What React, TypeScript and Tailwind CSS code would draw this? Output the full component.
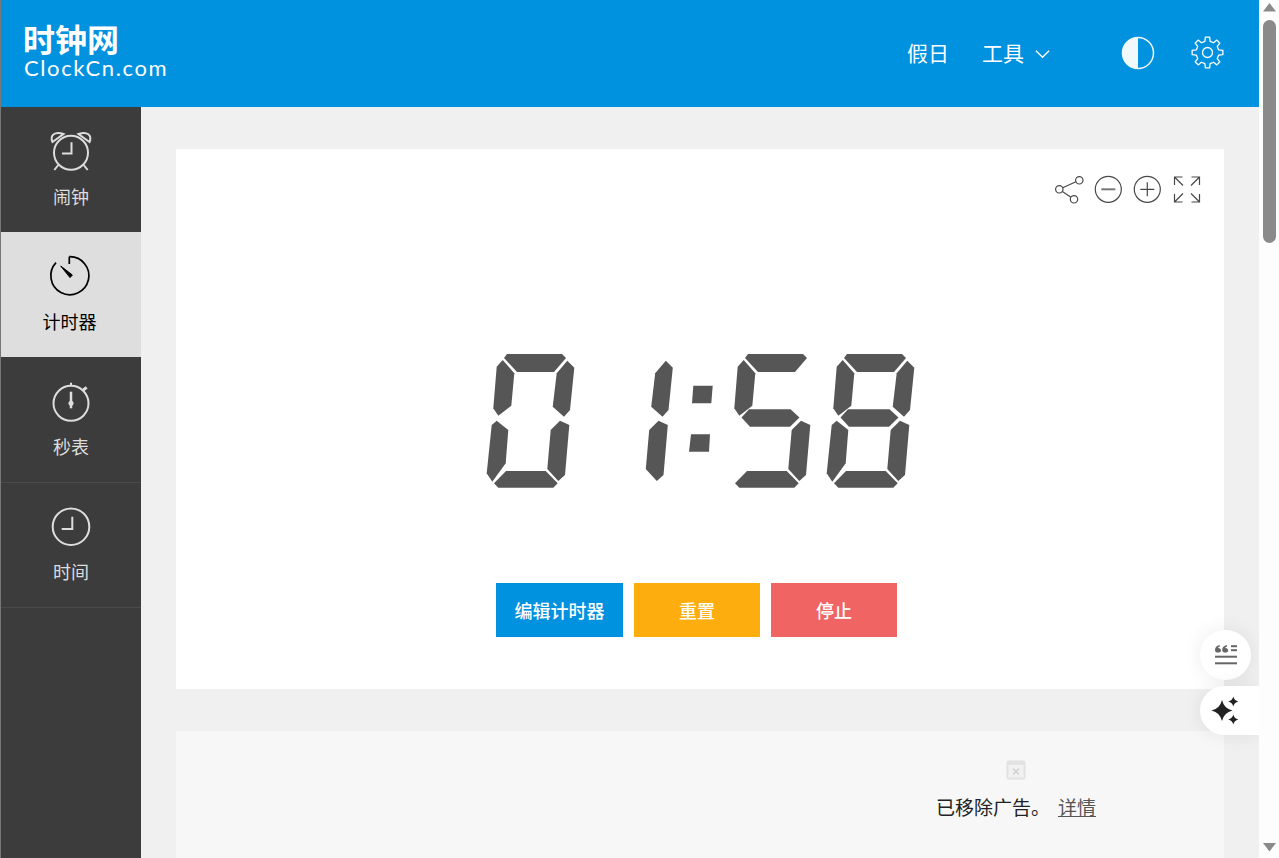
const SEGMENTS: Record<string, string> = {
  a: "504,358 507,354 562,354 566,358 554,372 517,372",
  f: "502.7,360 514.3,373.3 511.3,405.7 498.3,415.7 493.3,408.3 496.7,366.7",
  b: "567.3,360.7 574.3,367.7 570,410 564,416.7 552.7,406.7 556.7,373.3",
  g: "508,409.3 549.5,409.3 558.5,417.5 549,426.7 509,426.7 500.5,417.5",
  e: "496.7,420.7 508.3,430 505.7,463.3 492.3,481.7 486.7,473.3 491.7,425",
  c: "560,420.7 569.3,425 565,475 558.3,481 547.3,469 550.7,430",
  d: "506,471 545.7,471 557.7,483.3 553.3,487.7 498.3,487.7 494,483.3",
};

const DIGITS: Record<string, string[]> = {
  "0": ["a", "b", "c", "d", "e", "f"],
  "1": ["b", "c"],
  "5": ["a", "f", "g", "c", "d"],
  "8": ["a", "b", "c", "d", "e", "f", "g"],
};

function SevenSegment({ digit, x }: { digit: string; x: number }) {
  return (
    <g transform={`translate(${x} 0)`}>
      {DIGITS[digit].map((s) => (
        <polygon key={s} points={SEGMENTS[s]} />
      ))}
    </g>
  );
}

function TimerDisplay() {
  return (
    <svg
      role="img"
      aria-label="01:58"
      viewBox="480 350 440 142"
      className="w-[440px] h-[142px] fill-[#565656]"
    >
      <SevenSegment digit="0" x={0} />
      <SevenSegment digit="1" x={98.5} />
      <polygon points="693.3,385.7 712.7,385.7 711.3,403.3 692,403.3" />
      <polygon points="691,434.3 710,434.3 709,451.7 689,451.7" />
      <SevenSegment digit="5" x={241} />
      <SevenSegment digit="8" x={340} />
    </svg>
  );
}

function AlarmIcon() {
  return (
    <svg viewBox="0 0 50 50" className="w-[50px] h-[50px] fill-none stroke-[#dddddd] stroke-[2]">
      <circle cx="25" cy="27.7" r="17" />
      <path d="M25.5 17.3V28.6H16" />
      <path d="M6.5 17C3.5 10 9 6 17.5 9Z" />
      <path d="M43.5 17C46.5 10 41 6 32.5 9Z" />
      <path d="M12.3 40L8.3 45M37.7 40L41.7 45" />
    </svg>
  );
}

function TimerIcon() {
  return (
    <svg viewBox="0 0 50 50" className="w-[50px] h-[50px] fill-none stroke-black stroke-[1.7]">
      <path d="M23.3 6.7A19 19 0 1 1 10 12.7" />
      <path d="M23.3 6.7V14" />
      <path d="M14.7 16L26.4 25L24 27.6Z" className="fill-black stroke-black stroke-[1]" />
    </svg>
  );
}

function StopwatchIcon() {
  return (
    <svg viewBox="0 0 50 50" className="w-[50px] h-[50px] fill-none stroke-[#dddddd] stroke-[2]">
      <circle cx="25" cy="28.3" r="17.5" />
      <path d="M25 7.7V11" />
      <path d="M37.3 15L40.7 12.3" className="stroke-[3]" />
      <path d="M25 16.7V33.3" className="stroke-[2.5]" />
      <circle cx="25" cy="28.3" r="2.5" className="fill-[#dddddd] stroke-none" />
    </svg>
  );
}

function ClockIcon() {
  return (
    <svg viewBox="0 0 50 50" className="w-[50px] h-[50px] fill-none stroke-[#dddddd] stroke-[2]">
      <circle cx="25" cy="26.7" r="18.3" />
      <path d="M26.3 16.7V29H15.7" />
    </svg>
  );
}

const NAV_ITEMS = [
  { label: "闹钟", icon: <AlarmIcon />, active: false, border: false },
  { label: "计时器", icon: <TimerIcon />, active: true, border: false },
  { label: "秒表", icon: <StopwatchIcon />, active: false, border: true },
  { label: "时间", icon: <ClockIcon />, active: false, border: true },
];

function Sidebar() {
  return (
    <div className="w-[140px] shrink-0 bg-[#3c3c3c]">
      {NAV_ITEMS.map((item) => (
        <div
          key={item.label}
          className={`h-[125px] pt-[18px] flex flex-col items-center ${
            item.active ? "bg-[#dedede] text-black" : "text-[#dddddd]"
          } ${item.border ? "shadow-[0_1px_0_#4a4a4a]" : ""}`}
        >
          {item.icon}
          <div className={`mt-[9px] text-[18px] leading-[24px] ${item.active ? "mr-[3px]" : ""}`}>
            {item.label}
          </div>
        </div>
      ))}
    </div>
  );
}

// 8 flat teeth, one pointing straight up
function gearPath(cx: number, cy: number, outer: number, inner: number) {
  const pt = (r: number, deg: number) => {
    const a = ((deg - 90) * Math.PI) / 180;
    return `${(cx + r * Math.cos(a)).toFixed(2)} ${(cy + r * Math.sin(a)).toFixed(2)}`;
  };
  let d = "";
  for (let i = 0; i < 8; i++) {
    const t = i * 45;
    d += `${i === 0 ? "M" : "L"}${pt(inner, t - 13)}L${pt(outer, t - 8)}L${pt(outer, t + 8)}L${pt(inner, t + 13)}`;
  }
  return d + "Z";
}

function Header() {
  return (
    <div className="h-[107px] shrink-0 bg-[#0091df] flex items-center justify-between pl-[22px] pr-[35px] text-white">
      <div className="pb-[8px]">
        <div className="text-[32px] leading-[36px] font-bold">时钟网</div>
        <div className="ml-[1px] text-[22px] leading-[24px] tracking-[1.6px] font-['Lato','Liberation_Sans',sans-serif]">
          ClockCn.com
        </div>
      </div>
      <div className="flex items-center pb-[2px]">
        <span className="mb-[2px] text-[21px] leading-[28px]">假日</span>
        <span className="mb-[2px] ml-[33px] text-[21px] leading-[28px]">工具</span>
        <svg viewBox="0 0 16 10" className="ml-[11px] mt-[3px] w-[15px] h-[10px] fill-none stroke-white stroke-[1.5]">
          <path d="M1 1.5L8 8.5L15 1.5" />
        </svg>
        <svg viewBox="0 0 34 34" className="ml-[71px] w-[34px] h-[34px]">
          <circle cx="17" cy="17" r="15.5" className="fill-none stroke-[#f2f9fd] stroke-[1.5]" />
          <path d="M17 1.5A15.5 15.5 0 0 0 17 32.5Z" className="fill-[#f2f9fd]" />
        </svg>
        <svg viewBox="0 0 33 33" className="ml-[36px] w-[33px] h-[33px] fill-none stroke-white stroke-[1.3]">
          <path d={gearPath(16.5, 16.5, 15.5, 11.5)} strokeLinejoin="round" />
          <circle cx="16.5" cy="16.5" r="5" />
        </svg>
      </div>
    </div>
  );
}

function CardTools() {
  return (
    <div className="flex justify-end pr-[18px] h-[30px]">
      <svg viewBox="0 0 39 30" className="w-[39px] h-[30px] fill-none stroke-[#484848] stroke-[1.2]">
        <circle cx="29.3" cy="6.3" r="3.7" />
        <circle cx="9.3" cy="15.3" r="3.7" />
        <circle cx="24" cy="25.3" r="3.7" />
        <path d="M12.7 13.8L25.9 7.8M12.4 17.4L20.9 23.2" />
      </svg>
      <svg viewBox="0 0 39 30" className="w-[39px] h-[30px] fill-none stroke-[#484848] stroke-[1.2]">
        <circle cx="19.3" cy="15.3" r="13" />
        <path d="M12.3 15.3H26.3" className="stroke-[#777777] stroke-[2]" />
      </svg>
      <svg viewBox="0 0 39 30" className="w-[39px] h-[30px] fill-none stroke-[#484848] stroke-[1.2]">
        <circle cx="19.3" cy="15.3" r="13" />
        <path d="M12.3 15.3H26.3M19.3 8.3V22.3" />
      </svg>
      <svg viewBox="0 0 39 30" className="w-[39px] h-[30px] fill-none stroke-[#484848] stroke-[1.2]">
        <path d="M7.5 11V3H15.5M7.5 3L16 11.5" />
        <path d="M32.5 11V3H24.5M32.5 3L24 11.5" />
        <path d="M7.5 20V28H15.5M7.5 28L16 19.5" />
        <path d="M32.5 20V28H24.5M32.5 28L24 19.5" />
      </svg>
    </div>
  );
}

function TimerCard() {
  return (
    <div className="bg-white h-[540px] pt-[25px]">
      <CardTools />
      <div className="mt-[146px] flex justify-center">
        <TimerDisplay />
      </div>
      <div className="mt-[91px] pr-[7px] flex justify-center gap-[11px] text-white text-[18px] font-medium">
        <button className="w-[127px] h-[54px] bg-[#0091df]">编辑计时器</button>
        <button className="w-[126px] h-[54px] bg-[#fdae0e]">重置</button>
        <button className="w-[126px] h-[54px] bg-[#f06464]">停止</button>
      </div>
    </div>
  );
}

function AdRemoved() {
  return (
    <div className="mt-[42px] h-[200px] bg-[#f7f7f7] flex justify-end">
      <div className="w-[416px] pt-[29px] flex flex-col items-center">
        <svg viewBox="0 0 20 20" className="w-[20px] h-[20px]">
          <rect x="0.5" y="0.5" width="19" height="19" rx="2" className="fill-[#e2e2e2]" />
          <rect x="2.5" y="5" width="15" height="12.5" className="fill-[#f1f1f1]" />
          <path d="M7 8.5L13 14.5M13 8.5L7 14.5" className="stroke-[#d0d0d0] stroke-[1.5]" />
        </svg>
        <div className="mt-[13px] text-[19px] leading-[28px] text-[#222222]">
          已移除广告。
          <span className="ml-[8px] underline text-[#555555]">详情</span>
        </div>
      </div>
    </div>
  );
}

function FloatingButtons() {
  return (
    <>
      <div className="absolute left-[1199px] top-[630px] w-[51px] h-[50px] rounded-full bg-white shadow-[0_0_20px_rgba(0,0,0,0.08)] flex items-center justify-center">
        <svg viewBox="0 0 24 22" className="w-[24px] h-[22px] fill-[#666666]">
          <path d="M1 6.2C1 3.4 2.6 1.7 5.6 1L6 2.6C4.9 2.9 4.2 3.4 4 4.1C5.7 4 7 5 7 6.4C7 7.8 5.7 8.6 4.2 8.6C2.3 8.6 1 7.8 1 6.2Z" />
          <path d="M8.2 6.2C8.2 3.4 9.8 1.7 12.8 1L13.2 2.6C12.1 2.9 11.4 3.4 11.2 4.1C12.9 4 14.2 5 14.2 6.4C14.2 7.8 12.9 8.6 11.4 8.6C9.5 8.6 8.2 7.8 8.2 6.2Z" />
          <rect x="17" y="1.2" width="6" height="2" />
          <rect x="17" y="5.2" width="6" height="2" />
          <rect x="1" y="11.7" width="22" height="2" />
          <rect x="1" y="18.3" width="22" height="2" />
        </svg>
      </div>
      <div className="absolute left-[1199px] top-[686px] w-[59px] h-[49px] rounded-l-full bg-white shadow-[0_0_20px_rgba(0,0,0,0.08)] flex items-center pl-[10px]">
        <svg viewBox="0 0 30 30" className="w-[30px] h-[30px] fill-[#222222]">
          <path d="M12 4Q14 12.5 22.5 14.5Q14 16.5 12 25Q10 16.5 1.5 14.5Q10 12.5 12 4Z" />
          <path d="M23.3 0.5Q24.2 4.6 28.3 5.5Q24.2 6.4 23.3 10.5Q22.4 6.4 18.3 5.5Q22.4 4.6 23.3 0.5Z" />
          <path d="M23.3 18.5Q24.2 22.6 28.3 23.5Q24.2 24.4 23.3 28.5Q22.4 24.4 18.3 23.5Q22.4 22.6 23.3 18.5Z" />
        </svg>
      </div>
    </>
  );
}

function Scrollbar() {
  return (
    <div className="relative z-10 w-[20px] shrink-0 bg-[#fdfdfd] flex flex-col items-center">
      <svg viewBox="0 0 13 9" className="mt-[3px] ml-[1px] w-[13px] h-[9px] fill-[#8a8a8a]">
        <path d="M6.5 0L13 8.5H0Z" />
      </svg>
      <div className="mt-[8px] ml-[1px] w-[13px] h-[223px] rounded-full bg-[#8a8a8a]" />
      <svg viewBox="0 0 13 9" className="mt-auto mb-[6px] ml-[1px] w-[13px] h-[9px] fill-[#8a8a8a]">
        <path d="M6.5 8.5L13 0H0Z" />
      </svg>
    </div>
  );
}

export default function App() {
  return (
    <div className="relative h-[858px] w-[1279px] flex overflow-hidden border-l border-[#777777] font-['Noto_Sans_CJK_SC','Liberation_Sans',sans-serif]">
      <div className="w-[1258px] shrink-0 flex flex-col">
        <Header />
        <div className="flex flex-1 min-h-0">
          <Sidebar />
          <div className="flex-1 bg-[#f0f0f0] overflow-hidden pt-[42px] px-[35px]">
            <TimerCard />
            <AdRemoved />
          </div>
        </div>
      </div>
      <Scrollbar />
      <FloatingButtons />
    </div>
  );
}
